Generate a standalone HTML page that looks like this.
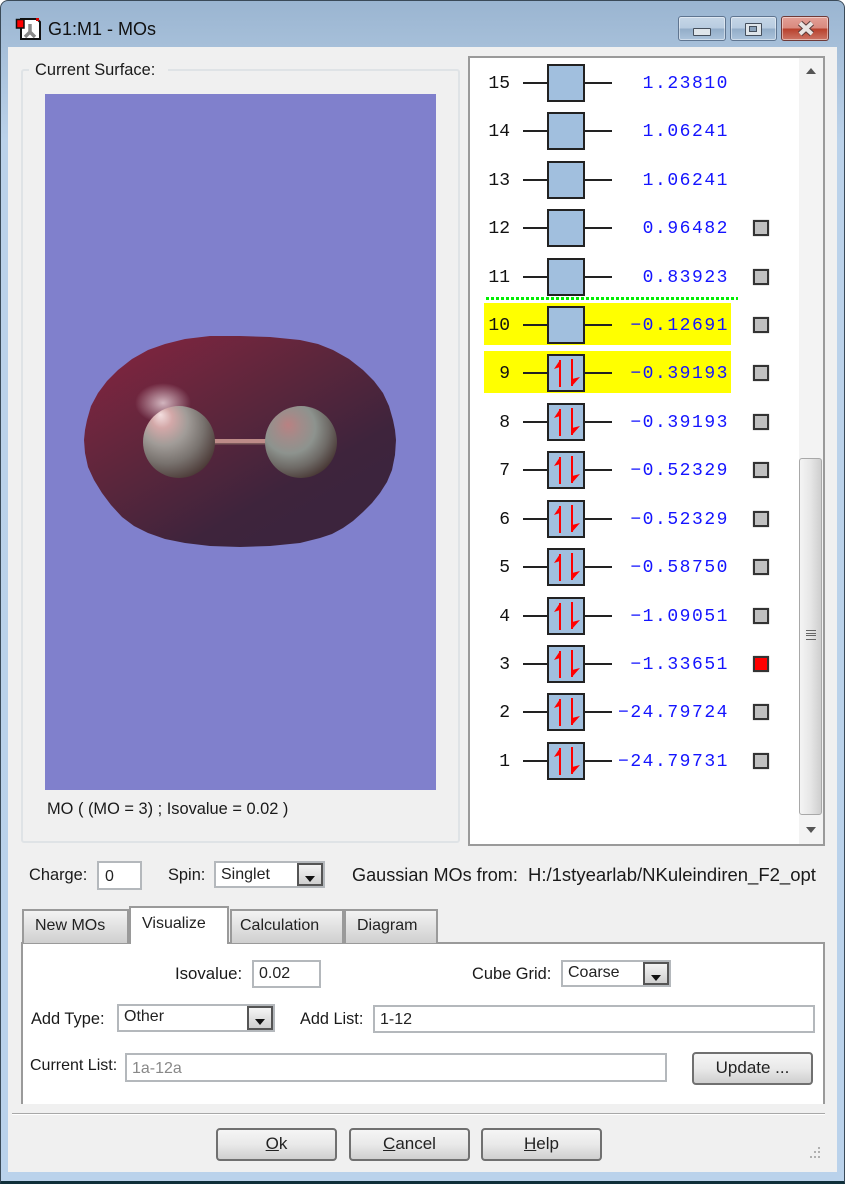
<!DOCTYPE html>
<html><head><meta charset="utf-8"><title>G1:M1 - MOs</title>
<style>
html,body{margin:0;padding:0;width:845px;height:1184px;overflow:hidden;background:#fff}
*{box-sizing:border-box}
#win{position:absolute;left:0;top:0;width:845px;height:1184px;background:linear-gradient(#9ab5d1 0,#a6bfd9 45px,#bbd2ea 140px,#bad2eb 100%);border-radius:8px 8px 0 0;border:1px solid #3a4a58;border-bottom:3px solid #10303a;overflow:hidden}
.a{position:absolute}
.t{position:absolute;font:16.4px/20px "Liberation Sans",sans-serif;color:#1a1a1a;white-space:pre}
#client{position:absolute;left:7px;top:46px;width:829px;height:1125px;background:#f0f0f0}
.wb{position:absolute;top:16px;height:25px;border:1px solid #5f7590;border-radius:3px;background:linear-gradient(#c6d6e7 0,#b8cce0 48%,#93adc8 52%,#abc3db 100%);box-shadow:inset 0 0 0 1px rgba(255,255,255,.45)}
#panel{position:absolute;left:468px;top:56px;width:357px;height:790px;background:#fff;border:2px solid #9a9a9a}
.r{position:absolute;left:0;width:300px;height:0}
.n{position:absolute;left:478px;width:32px;top:-10px;text-align:right;font:18px/22px "Liberation Mono",monospace;color:#111}
.l{position:absolute;left:523px;width:89px;top:-1px;height:2px;background:#222}
.b{position:absolute;left:547px;top:-19px;width:38px;height:38px;background:#a1bfde;border:2px solid #222}
.b svg{position:absolute;left:-2px;top:-2px;width:38px;height:38px}
.e{position:absolute;left:588px;width:141px;top:-10px;text-align:right;font:18px/22px "Liberation Mono",monospace;letter-spacing:1.53px;color:#1414ff}
.c{position:absolute;left:753px;top:-8px;width:16px;height:16px;background:#c0c0c0;border:2px solid #333;box-shadow:0 0 1px #888}
.y{position:absolute;left:484px;width:247px;height:42px;background:#ff0}
.inp{position:absolute;background:#fff;border:2px solid #b4b8bc;font:16px/24px "Liberation Sans",sans-serif;color:#222;padding-left:5px;white-space:pre}
.combo{position:absolute;background:#fff;border:2px solid #b4b8bc;font:16px/20px "Liberation Sans",sans-serif;color:#222;padding:1px 0 0 5px}
.combo i{position:absolute;right:0;top:0;bottom:0;width:26px;border:2px solid #555;background:linear-gradient(#f4f4f4,#cfcfcf)}
.combo i:after{content:"";position:absolute;left:6px;top:11px;border:5px solid transparent;border-top:6px solid #111;border-bottom:0}
.tab{position:absolute;top:909px;height:34px;border:2px solid #9a9a9a;border-bottom:0;background:linear-gradient(#f3f3f3,#dfdfdf 55%,#cfcfcf);font:16px/30px "Liberation Sans",sans-serif;color:#222;text-align:left}
.btn{position:absolute;height:33px;border:2px solid #707070;border-radius:4px;background:linear-gradient(#f5f5f5,#e9e9e9 50%,#cfcfcf);font:17px/28px "Liberation Sans",sans-serif;color:#222;text-align:center}
</style></head><body>
<div id="win">
<div id="client"></div>
</div>

<svg class="a" style="left:15px;top:15px" width="28" height="28" viewBox="0 0 28 28"><path d="M6 4H22L25 7V24H6Z" fill="#fff" stroke="#111" stroke-width="2"/><path d="M15 9V17M15 17L10 22M15 17L20 22" stroke="#8a8a8a" stroke-width="3.5" fill="none"/><rect x="1.5" y="4.5" width="7.5" height="8.5" fill="#f00" stroke="#111" stroke-width="1.5"/><rect x="21" y="3" width="3" height="3" fill="#d00"/></svg>
<div class="t" style="left:48px;top:19px;font-size:18px;color:#111">G1:M1 - MOs</div>

<div class="wb" style="left:678px;width:48px"><div class="a" style="left:14px;top:11px;width:18px;height:8px;background:#dfe5ea;border:1.5px solid #454f5c;border-radius:1px"></div></div>
<div class="wb" style="left:730px;width:47px"><div class="a" style="left:14px;top:6px;width:17px;height:13px;background:#dfe5ea;border:1.5px solid #454f5c;border-radius:1px"><div class="a" style="left:3px;top:2px;width:8px;height:6px;background:#8ba3bb;border:1px solid #454f5c"></div></div></div>
<div class="wb" style="left:781px;width:48px;border-color:#6e3a38;background:linear-gradient(#e4a097 0,#d98a7f 48%,#b8402c 52%,#cc7566 100%)"><svg class="a" style="left:14px;top:3px" width="20" height="17" viewBox="0 0 20 17"><path d="M4 3L16 14M16 3L4 14" stroke="#5a3b39" stroke-width="6"/><path d="M4 3L16 14M16 3L4 14" stroke="#e8e4e2" stroke-width="4"/></svg></div>

<div class="a" style="left:21px;top:69px;width:439px;height:774px;border:2px solid #dfe3e6;border-radius:3px"></div>
<div class="t" style="left:29px;top:60px;background:#f0f0f0;padding:0 13px 0 6px">Current Surface:</div>

<svg class="a" style="left:45px;top:94px" width="391" height="696" viewBox="45 94 391 696">
<defs>
<linearGradient id="o" x1="0.08" y1="0.1" x2="0.72" y2="0.85"><stop offset="0" stop-color="#7e253f"/><stop offset="0.45" stop-color="#5c263c"/><stop offset="0.85" stop-color="#3e243c"/><stop offset="1" stop-color="#3c243d"/></linearGradient>
<radialGradient id="s1" cx="0.36" cy="0.34" r="0.72" fx="0.24" fy="0.12"><stop offset="0" stop-color="#f3dfe0"/><stop offset="0.2" stop-color="#d3a8a8"/><stop offset="0.45" stop-color="#a19c98"/><stop offset="0.72" stop-color="#78726e"/><stop offset="1" stop-color="#4a3835"/></radialGradient>
<radialGradient id="s2" cx="0.36" cy="0.34" r="0.72" fx="0.32" fy="0.26"><stop offset="0" stop-color="#b98182"/><stop offset="0.25" stop-color="#a08c8a"/><stop offset="0.5" stop-color="#8d938e"/><stop offset="0.75" stop-color="#6e6a66"/><stop offset="1" stop-color="#473633"/></radialGradient>
<radialGradient id="g"><stop offset="0" stop-color="#ecd8de" stop-opacity=".8"/><stop offset="1" stop-color="#ecd8de" stop-opacity="0"/></radialGradient>
</defs>
<rect x="45" y="94" width="391" height="696" fill="#8080cc"/>
<polygon points="210,336 240,336 270,337 300,340 318,344 333,350 349,359 363,370 374,381 383,393 389,406 393,420 395,430 396,440 395,455 392,470 387,482 380,493 372,503 363,512 353,521 343,528 332,534 320,538 300,543 270,546 240,547 210,546 185,543 165,539 148,533 134,526 122,517 111,505 102,493 94,480 88,467 85,453 84,440 85,430 87,420 91,406 98,393 107,381 118,370 132,359 148,350 165,344 185,339" fill="url(#o)"/>
<ellipse cx="163" cy="403" rx="28" ry="20" fill="url(#g)"/>
<rect x="212" y="439" width="56" height="4" fill="#bd8b88"/>
<rect x="212" y="443" width="56" height="1.5" fill="#7d5a5c"/>
<circle cx="179" cy="442" r="36" fill="url(#s1)"/>
<circle cx="301" cy="442" r="36" fill="url(#s2)"/>
</svg>
<div class="t" style="left:47px;top:799px">MO ( (MO = 3) ; Isovalue = 0.02 )</div>

<div id="panel"></div>
<div class="a" style="left:799px;top:58px;width:24px;height:786px;background:#f3f3f3"></div>
<div class="a" style="left:799px;top:458px;width:23px;height:357px;border:1.5px solid #a8a8a8;border-radius:3px;background:linear-gradient(90deg,#f4f4f4,#e8e8e8 45%,#cfcfcf)"></div>
<div class="a" style="left:806px;top:630px;width:10px;height:10px;border-top:1px solid #666;border-bottom:1px solid #666"><div class="a" style="left:0;top:2px;width:10px;height:3px;border-top:1px solid #666;border-bottom:1px solid #666"></div></div>
<div class="a" style="left:806px;top:68px;border:5px solid transparent;border-bottom:6px solid #555;border-top:0"></div>
<div class="a" style="left:806px;top:827px;border:5px solid transparent;border-top:6px solid #555;border-bottom:0"></div>

<div class="a" style="left:486px;top:297px;width:252px;height:3px;background:repeating-linear-gradient(90deg,#0e0 0,#0e0 3px,transparent 3px,transparent 5px)"></div>
<div class="y" style="top:303px"></div>
<div class="y" style="top:351px"></div>

<div class="r" style="top:82.5px"><div class="n">15</div><div class="l"></div><div class="b"></div><div class="e">1.23810</div></div>
<div class="r" style="top:131px"><div class="n">14</div><div class="l"></div><div class="b"></div><div class="e">1.06241</div></div>
<div class="r" style="top:179.5px"><div class="n">13</div><div class="l"></div><div class="b"></div><div class="e">1.06241</div></div>
<div class="r" style="top:228px"><div class="n">12</div><div class="l"></div><div class="b"></div><div class="e">0.96482</div><div class="c"></div></div>
<div class="r" style="top:276.5px"><div class="n">11</div><div class="l"></div><div class="b"></div><div class="e">0.83923</div><div class="c"></div></div>
<div class="r" style="top:325px"><div class="n">10</div><div class="l"></div><div class="b"></div><div class="e">−0.12691</div><div class="c"></div></div>
<div class="r" style="top:373px"><div class="n">9</div><div class="l"></div><div class="b"><svg viewBox="0 0 38 38"><path d="M13 6V33M25 5V32" stroke="#f00" stroke-width="2"/><path d="M13 6L7 15L13 13ZM25 32L33 23L25 25Z" fill="#f00"/></svg></div><div class="e">−0.39193</div><div class="c"></div></div>
<div class="r" style="top:421.5px"><div class="n">8</div><div class="l"></div><div class="b"><svg viewBox="0 0 38 38"><path d="M13 6V33M25 5V32" stroke="#f00" stroke-width="2"/><path d="M13 6L7 15L13 13ZM25 32L33 23L25 25Z" fill="#f00"/></svg></div><div class="e">−0.39193</div><div class="c"></div></div>
<div class="r" style="top:470px"><div class="n">7</div><div class="l"></div><div class="b"><svg viewBox="0 0 38 38"><path d="M13 6V33M25 5V32" stroke="#f00" stroke-width="2"/><path d="M13 6L7 15L13 13ZM25 32L33 23L25 25Z" fill="#f00"/></svg></div><div class="e">−0.52329</div><div class="c"></div></div>
<div class="r" style="top:518.5px"><div class="n">6</div><div class="l"></div><div class="b"><svg viewBox="0 0 38 38"><path d="M13 6V33M25 5V32" stroke="#f00" stroke-width="2"/><path d="M13 6L7 15L13 13ZM25 32L33 23L25 25Z" fill="#f00"/></svg></div><div class="e">−0.52329</div><div class="c"></div></div>
<div class="r" style="top:567px"><div class="n">5</div><div class="l"></div><div class="b"><svg viewBox="0 0 38 38"><path d="M13 6V33M25 5V32" stroke="#f00" stroke-width="2"/><path d="M13 6L7 15L13 13ZM25 32L33 23L25 25Z" fill="#f00"/></svg></div><div class="e">−0.58750</div><div class="c"></div></div>
<div class="r" style="top:615.5px"><div class="n">4</div><div class="l"></div><div class="b"><svg viewBox="0 0 38 38"><path d="M13 6V33M25 5V32" stroke="#f00" stroke-width="2"/><path d="M13 6L7 15L13 13ZM25 32L33 23L25 25Z" fill="#f00"/></svg></div><div class="e">−1.09051</div><div class="c"></div></div>
<div class="r" style="top:664px"><div class="n">3</div><div class="l"></div><div class="b"><svg viewBox="0 0 38 38"><path d="M13 6V33M25 5V32" stroke="#f00" stroke-width="2"/><path d="M13 6L7 15L13 13ZM25 32L33 23L25 25Z" fill="#f00"/></svg></div><div class="e">−1.33651</div><div class="c" style="background:#f00"></div></div>
<div class="r" style="top:712px"><div class="n">2</div><div class="l"></div><div class="b"><svg viewBox="0 0 38 38"><path d="M13 6V33M25 5V32" stroke="#f00" stroke-width="2"/><path d="M13 6L7 15L13 13ZM25 32L33 23L25 25Z" fill="#f00"/></svg></div><div class="e">−24.79724</div><div class="c"></div></div>
<div class="r" style="top:760.5px"><div class="n">1</div><div class="l"></div><div class="b"><svg viewBox="0 0 38 38"><path d="M13 6V33M25 5V32" stroke="#f00" stroke-width="2"/><path d="M13 6L7 15L13 13ZM25 32L33 23L25 25Z" fill="#f00"/></svg></div><div class="e">−24.79731</div><div class="c"></div></div>

<div class="t" style="left:29px;top:865px">Charge:</div>
<div class="inp" style="left:97px;top:861px;width:45px;height:29px;line-height:27px;padding-left:6px">0</div>
<div class="t" style="left:168px;top:865px">Spin:</div>
<div class="combo" style="left:214px;top:861px;width:111px;height:27px;padding-top:2px">Singlet<i></i></div>
<div class="t" style="left:352px;top:865px;font-size:18.1px">Gaussian MOs from:</div>
<div class="t" style="left:528px;top:865px;font-size:18.5px">H:/1styearlab/NKuleindiren_F2_opt</div>

<div class="a" style="left:21px;top:942px;width:804px;height:163px;background:#fff;border:2px solid #9a9a9a;border-bottom:0"></div>
<div class="a" style="left:21px;top:1104px;width:804px;height:2px;background:#f0f0f0"></div>
<div class="tab" style="left:22px;width:107px;padding-left:11px">New MOs</div>
<div class="tab" style="left:129px;width:100px;top:906px;height:38px;background:#fff;z-index:2;line-height:32px;padding-left:11px">Visualize</div>
<div class="tab" style="left:230px;width:114px;padding-left:8px">Calculation</div>
<div class="tab" style="left:344px;width:94px;padding-left:11px">Diagram</div>

<div class="t" style="left:175px;top:964px;font-size:16.8px">Isovalue:</div>
<div class="inp" style="left:252px;top:960px;width:69px;height:28px">0.02</div>
<div class="t" style="left:472px;top:964px">Cube Grid:</div>
<div class="combo" style="left:561px;top:960px;width:110px;height:27px">Coarse<i></i></div>
<div class="t" style="left:31px;top:1009px">Add Type:</div>
<div class="combo" style="left:117px;top:1004px;width:158px;height:28px">Other<i></i></div>
<div class="t" style="left:300px;top:1009px;font-size:16.3px">Add List:</div>
<div class="inp" style="left:373px;top:1005px;width:442px;height:28px;line-height:25px">1-12</div>
<div class="t" style="left:30px;top:1056px;font-size:16px">Current List:</div>
<div class="inp" style="left:125px;top:1053px;width:542px;height:29px;color:#888;line-height:28px">1a-12a</div>
<div class="btn" style="left:692px;top:1052px;width:121px">Update ...</div>

<div class="a" style="left:12px;top:1113px;width:813px;height:2px;background:#a8a8a8;border-bottom:1px solid #fff"></div>
<div class="btn" style="left:216px;top:1128px;width:121px"><u>O</u>k</div>
<div class="btn" style="left:349px;top:1128px;width:121px"><u>C</u>ancel</div>
<div class="btn" style="left:481px;top:1128px;width:121px"><u>H</u>elp</div>
<svg class="a" style="left:808px;top:1146px" width="13" height="14" viewBox="0 0 13 14"><path d="M10 1h2v2h-2zM6 5h2v2H6zM10 5h2v2h-2zM2 10h2v2H2zM6 10h2v2H6zM10 10h2v2h-2z" fill="#b0b0b0"/></svg>
</body></html>
